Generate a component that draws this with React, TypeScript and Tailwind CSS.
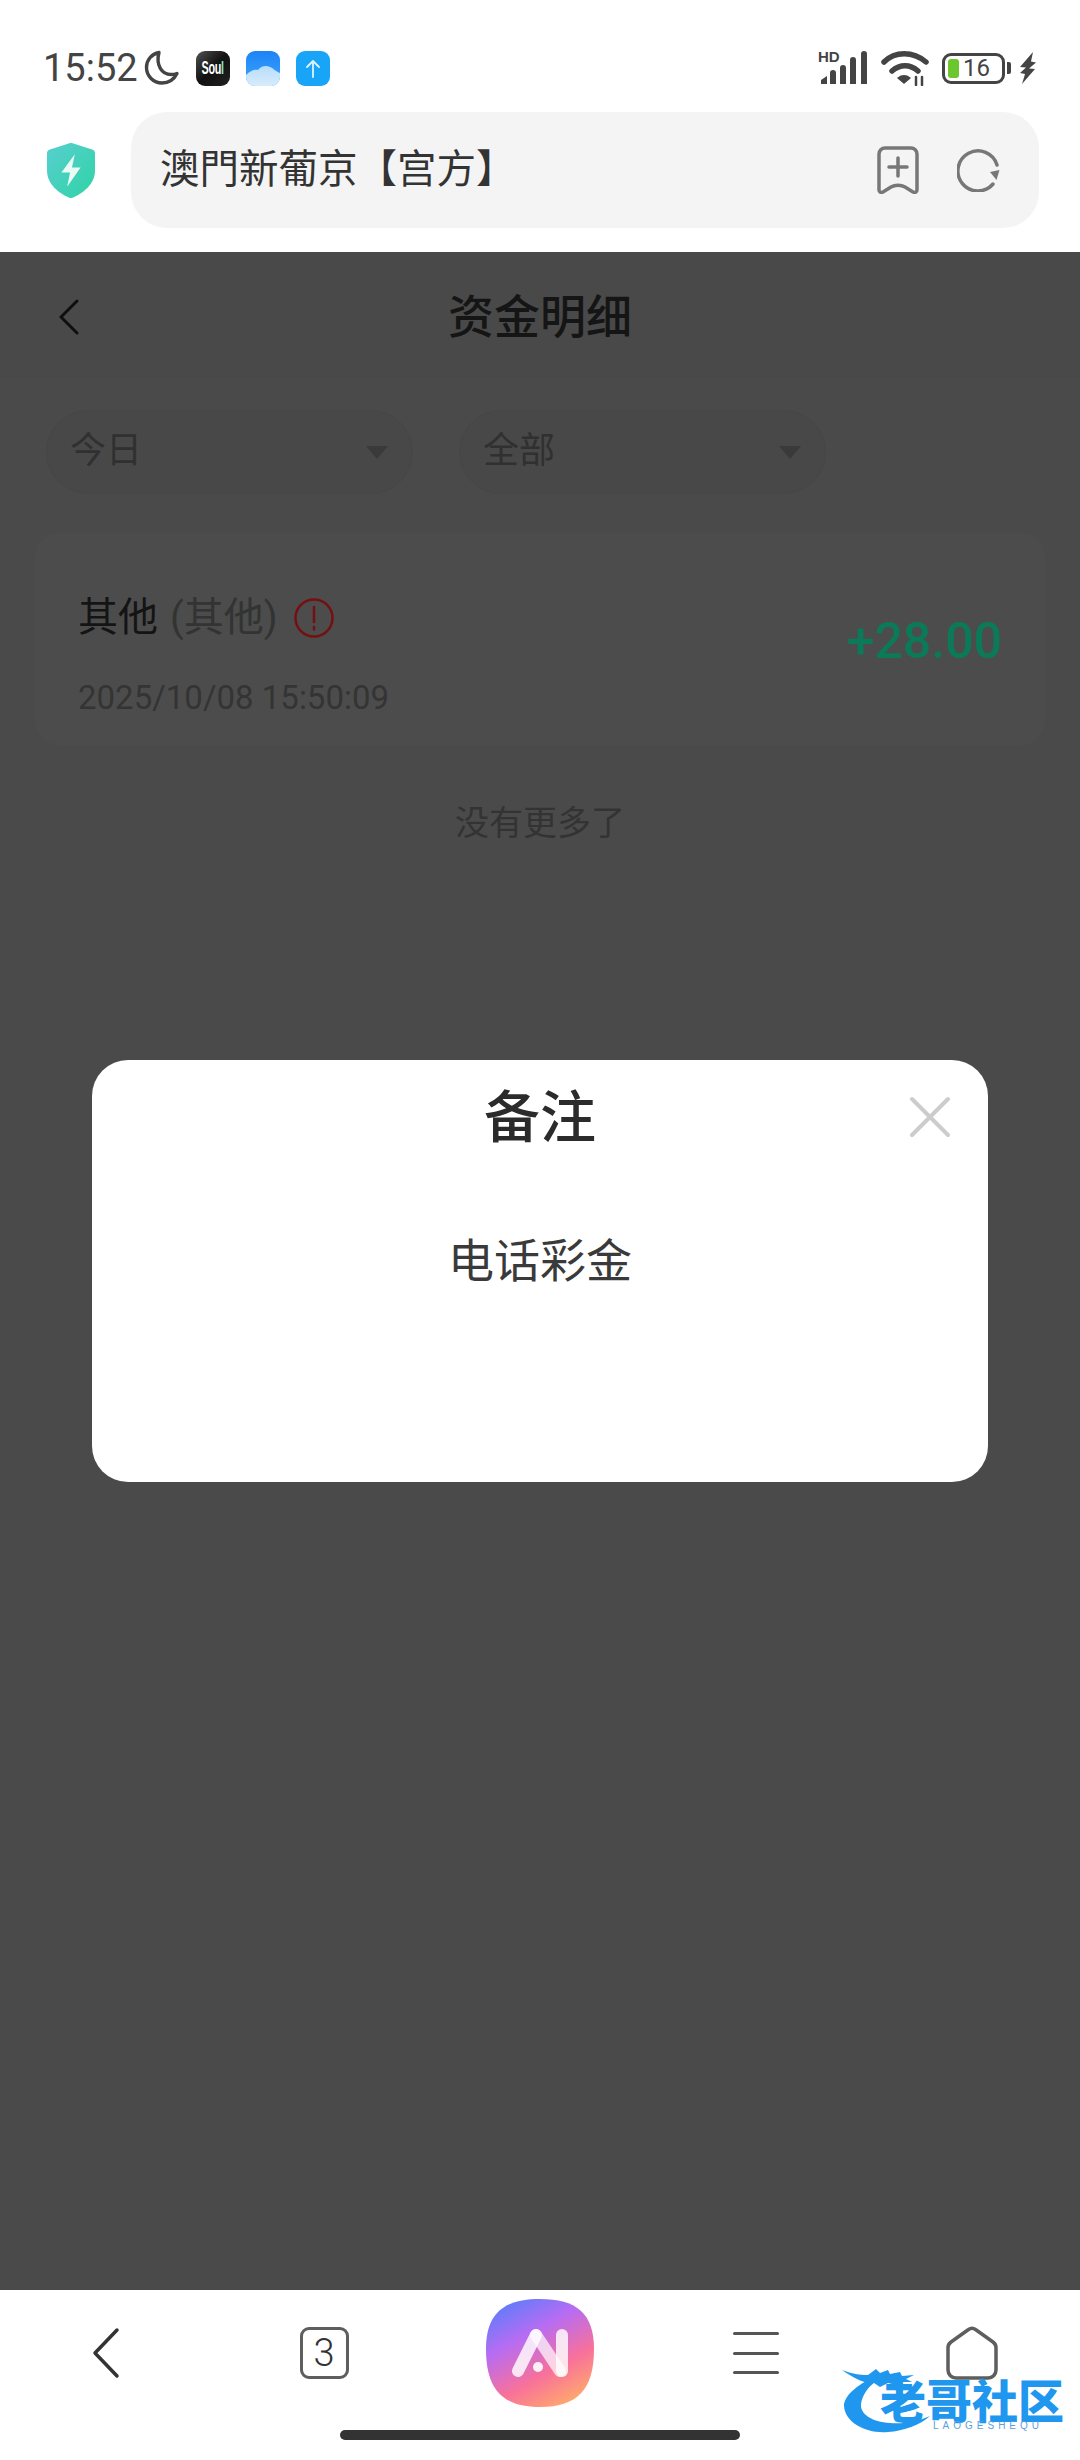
const font = "font-['Roboto','Noto_Sans_CJK_SC',sans-serif]";

function Moon() {
  return (
    <svg width="36" height="36" viewBox="0 0 36 36" fill="none" stroke="#444" strokeWidth="3.4" strokeLinecap="round" strokeLinejoin="round">
      <path d="M15 2.5C7.5 4 2.5 10 2.5 17.5 2.5 26 9.5 33 18 33c6.500 0 12-3.500 15-9.500-2 .8-4 1-6 1-9 0-15.500-9-12-22z" />
    </svg>
  );
}

function SoulIcon() {
  return (
    <div className="w-[34px] h-[35px] rounded-[9px] bg-gradient-to-br from-[#555] via-[#111] to-[#222] flex items-center justify-center overflow-hidden">
      <span className="font-['Liberation_Sans',sans-serif] text-[18px] leading-none font-bold text-white scale-x-[0.6] tracking-tight whitespace-nowrap">
        Sou<span className="text-[#7fe3d6]">l</span>
      </span>
    </div>
  );
}

function CloudIcon() {
  return (
    <svg width="34" height="35" viewBox="0 0 34 35">
      <defs>
        <linearGradient id="sky" x1="0" y1="0" x2="0" y2="1">
          <stop offset="0" stopColor="#1c83f6" />
          <stop offset="1" stopColor="#3fa9fb" />
        </linearGradient>
        <linearGradient id="cl" x1="0" y1="0" x2="0" y2="1">
          <stop offset="0" stopColor="#b8dcfb" />
          <stop offset="1" stopColor="#d8ecfc" />
        </linearGradient>
      </defs>
      <rect width="34" height="35" rx="9" fill="url(#sky)" />
      <path d="M0 24c4-4 8-6 12-5 3-4 8-5 12-3 3 1 5 4 10 6v4a9 9 0 0 1-9 9H9a9 9 0 0 1-9-9z" fill="url(#cl)" />
    </svg>
  );
}

function UploadIcon() {
  return (
    <svg width="34" height="35" viewBox="0 0 34 35" fill="none">
      <rect width="34" height="35" rx="9" fill="#19a5f7" />
      <path d="M17 26V10M11 16l6-6 6 6" stroke="#dff3ff" strokeWidth="1.8" strokeLinecap="round" strokeLinejoin="round" />
    </svg>
  );
}

function Signal() {
  return (
    <div className="relative w-[50px] h-[34px]">
      <span className="absolute left-0 -top-[2px] font-['Liberation_Sans',sans-serif] text-[15px] font-bold leading-none text-[#444]">HD</span>
      <svg className="absolute inset-0" width="50" height="34" viewBox="0 0 50 34" fill="#444">
        <path d="M3 33v-4l6-4v8zM12 33V22a3 3 0 0 1 6 0v11zM22 33V17a3 3 0 0 1 6 0v16zM32 33V9a3 3 0 0 1 6 0v24zM43 33V3a3 3 0 0 1 6 0v30z" />
      </svg>
    </div>
  );
}

function Wifi() {
  return (
    <svg width="48" height="36" viewBox="0 0 48 36" fill="none" stroke="#444" strokeLinecap="round">
      <path d="M3 12C14 1 32 1 45 12" strokeWidth="5.500" />
      <path d="M11 21c8-7 18-7 26 0" strokeWidth="5.500" />
      <path d="M23 33l-6-5c4-3 8-3 12 0z" fill="#444" strokeWidth="1.500" strokeLinejoin="round" />
      <path d="M35 35v-8M41 27v8" strokeWidth="2.500" />
    </svg>
  );
}

function Battery() {
  return (
    <div className="flex items-center gap-[2px]">
      <div className="w-[63px] h-[31px] border-[3px] border-[#444] rounded-[9px] flex items-center pl-[3px] gap-[4px]">
        <div className="w-[11px] h-[19px] rounded-[3px] bg-[#6cc72e]" />
        <span className="text-[24px] leading-none text-[#444]">16</span>
      </div>
      <div className="w-[4px] h-[12px] rounded-r-[2px] bg-[#444]" />
    </div>
  );
}

function Bolt() {
  return (
    <svg width="18" height="32" viewBox="0 0 18 32" fill="#444">
      <path d="M14 0L1 15l6 .5L1 21l5 1-3 10 13-15-6-.5 7-6-5-1z" />
    </svg>
  );
}

function StatusBar() {
  return (
    <div className="h-[112px] pt-6 pl-[43px] pr-[43px] flex items-center justify-between">
      <div className="flex items-center">
        <span className="text-[38px] leading-none text-[#444] w-[93px] whitespace-nowrap">15:52</span>
        <div className="ml-[8px]"><Moon /></div>
        <div className="ml-[16px] flex items-center gap-4">
          <SoulIcon />
          <CloudIcon />
          <UploadIcon />
        </div>
      </div>
      <div className="flex items-center">
        <Signal />
        <div className="ml-[13px]"><Wifi /></div>
        <div className="ml-[13px]"><Battery /></div>
        <div className="ml-[8px]"><Bolt /></div>
      </div>
    </div>
  );
}

function Shield() {
  return (
    <svg width="48" height="57" viewBox="0 0 50 58">
      <defs>
        <linearGradient id="shield" x1="0" y1="0" x2="1" y2="1">
          <stop offset="0" stopColor="#58cfd0" />
          <stop offset="1" stopColor="#2fd3a5" />
        </linearGradient>
      </defs>
      <path d="M25 0l22 7c2 .6 3 2 3 4v18c0 14-12 24-25 29C12 53 0 43 0 29V11c0-2 1-3.400 3-4z" fill="url(#shield)" />
      <path d="M29 12L15 31h9l-3 15 14-20h-9z" fill="#eafbf6" />
    </svg>
  );
}

function UrlBar() {
  return (
    <div className="flex items-center pl-[47px] pr-[41px] pb-6">
      <Shield />
      <div className="ml-[36px] flex-1 h-[116px] rounded-[36px] bg-[#f4f4f4] flex items-center pl-[29px] pr-[38px]">
        <span className="flex-1 text-[39.5px] leading-none text-[#333]">澳門新葡京【宫方】</span>
        <svg width="42" height="48" viewBox="0 0 42 48" fill="none" stroke="#777" strokeWidth="3.500" strokeLinecap="round" strokeLinejoin="round">
          <path d="M8 2h26a6 6 0 0 1 6 6v36c0 2-2 3-4 2l-8-5c-4-2.500-10-2.500-14 0l-8 5c-2 1-4 0-4-2V8a6 6 0 0 1 6-6z" />
          <path d="M21 12v18M12 21h18" />
        </svg>
        <svg className="ml-[38px]" width="44" height="44" viewBox="0 0 44 44" fill="none">
          <path d="M40 17A20 20 0 1 0 36 36" stroke="#777" strokeWidth="3.500" strokeLinecap="round" />
          <path d="M33 24l9.500-2-3 10z" fill="#777" />
        </svg>
      </div>
    </div>
  );
}

function Filter({ label }: { label: string }) {
  return (
    <div className="w-[367px] h-[84px] rounded-[42px] border border-[#464646] bg-[#484848] flex items-center justify-between pl-[23px] pr-[24px]">
      <span className="-mt-[2px] text-[36px] leading-none text-[#303030]">{label}</span>
      <div className="w-0 h-0 border-l-[11px] border-r-[11px] border-t-[13px] border-l-transparent border-r-transparent border-t-[#3a3a3a]" />
    </div>
  );
}

function Modal() {
  return (
    <div className="absolute inset-0 flex items-center justify-center">
      <div className="relative w-[896px] h-[422px] rounded-[36px] bg-white flex flex-col items-center">
        <h2 className="mt-[28px] text-[56px] leading-[60px] font-medium text-[#2b2b2b]">备注</h2>
        <p className="mt-[85px] text-[46px] leading-[56px] text-[#3a3a3a]">电话彩金</p>
        <svg className="absolute top-[35px] right-[36px]" width="44" height="44" viewBox="0 0 44 44" fill="none" stroke="#cccccc" strokeWidth="4" strokeLinecap="round">
          <path d="M4 4l36 36M40 4L4 40" />
        </svg>
      </div>
    </div>
  );
}

function Page() {
  return (
    <main className="relative flex-1 bg-[#4a4a4a]">
      <header className="relative h-[126px] pt-[5px] bg-[#494949] border-b border-[#484848] flex items-center justify-center">
        <svg className="absolute left-[58px]" width="22" height="36" viewBox="0 0 22 36" fill="none" stroke="#0f0f0f" strokeWidth="3" strokeLinecap="round" strokeLinejoin="round">
          <path d="M19 2L3 18l16 16" />
        </svg>
        <h1 className="text-[46px] leading-none font-medium text-[#151515]">资金明细</h1>
      </header>
      <div className="mt-[32px] pl-[46px] flex gap-[46px]">
        <Filter label="今日" />
        <Filter label="全部" />
      </div>
      <section className="mt-[39px] mx-[35px] h-[212px] rounded-[24px] bg-[#4c4c4c] pl-[43px] pr-[43px] flex items-center justify-between">
        <div className="pt-[34px]">
          <div className="flex items-center">
            <span className="text-[40px] leading-[46px] text-[#141414]">其他</span>
            <span className="ml-[12px] text-[40px] leading-[46px] text-[#333]">(其他)</span>
            <svg className="ml-[15px]" width="42" height="42" viewBox="0 0 42 42" fill="none" stroke="#751010" strokeWidth="2.500">
              <circle cx="21" cy="21" r="18.500" />
              <path d="M21 10v15M21 30v2.500" strokeLinecap="round" />
            </svg>
          </div>
          <div className="mt-[37px] text-[33px] leading-[40px] text-[#343434]">2025/10/08 15:50:09</div>
        </div>
        <span className="pt-[3px] text-[50px] leading-none font-medium text-[#0b7a58]">+28.00</span>
      </section>
      <p className="mt-[58px] text-center text-[34px] leading-[40px] text-[#333]">没有更多了</p>
      <Modal />
    </main>
  );
}

function Watermark() {
  return (
    <div className="absolute left-[842px] top-[78px] w-[225px] h-[70px]">
      <svg className="absolute inset-0 overflow-visible" width="225" height="70" viewBox="0 0 225 70" fill="#1f97ee">
        <path d="M30 10C10 20 2 30 2 38c1 17 23 28 44 26 16-1 32-7 42-16-14 6-26 8-40 7-18-1-30-9-29-19 1-8 7-18 17-24z" />
        <path d="M0 2c10 4 18 5 26 5l8-6 4 4 8-3 2 4 10-2 2 4 12-1-8 4 6 3-12 0-4 3-8-2-8 4-6-4c-10 1-22-6-32-13z" />
      </svg>
      <span className="absolute left-[38px] top-[15px] font-black text-[46px] leading-[38px] text-[#1f97ee] whitespace-nowrap">老哥社区</span>
      <span className="absolute left-[91px] top-[53px] text-[10px] leading-none tracking-[4px] text-[#5a9fe0] whitespace-nowrap font-['Liberation_Sans',sans-serif]">LAOGESHEQU</span>
    </div>
  );
}

function AiLogo() {
  return (
    <svg width="108" height="108" viewBox="0 0 108 108">
      <defs>
        <linearGradient id="ai" x1="0.2" y1="0" x2="0.75" y2="1">
          <stop offset="0" stopColor="#5c7dfb" />
          <stop offset="0.33" stopColor="#b76cf3" />
          <stop offset="0.68" stopColor="#f8719a" />
          <stop offset="1" stopColor="#ffab6b" />
        </linearGradient>
      </defs>
      <path d="M54 0C90 0 108 14 108 50c0 40-16 58-54 58S0 90 0 50C0 14 18 0 54 0z" fill="url(#ai)" />
      <g stroke="#fff" strokeWidth="12" strokeLinecap="round" fill="none">
        <path d="M50 36L32 72" opacity="0.82" />
        <path d="M50 36l24 36" opacity="0.7" />
        <path d="M76 36v36" opacity="0.82" />
      </g>
      <circle cx="52" cy="68" r="5" fill="#fff" opacity="0.9" />
    </svg>
  );
}

function BottomNav() {
  return (
    <nav className="relative h-[170px] bg-white">
      <div className="h-[126px] grid grid-cols-5 items-center justify-items-center">
        <svg className="-ml-[5px]" width="28" height="52" viewBox="0 0 28 52" fill="none" stroke="#333" strokeWidth="3.500" strokeLinecap="round" strokeLinejoin="round">
          <path d="M25 3L3 26l22 23" />
        </svg>
        <div className="w-[49px] h-[52px] rounded-[9px] border-[3px] border-[#5e5e5e] flex items-center justify-center">
          <span className="text-[38px] font-light leading-none text-[#333]">3</span>
        </div>
        <AiLogo />
        <div className="w-[46px] h-[42px] flex flex-col justify-between">
          <div className="h-[3px] rounded bg-[#555]" />
          <div className="h-[3px] rounded bg-[#555]" />
          <div className="h-[3px] rounded bg-[#555]" />
        </div>
        <svg width="52" height="54" viewBox="0 0 52 54" fill="none" stroke="#5e5e5e" strokeWidth="3.500" strokeLinejoin="round">
          <path d="M22.500 3.500L5 16c-2 1.500-3 3-3 5.500V44a8 8 0 0 0 8 8h32a8 8 0 0 0 8-8V21.500c0-2.500-1-4-3-5.500L29.500 3.500c-2-1.500-5-1.500-7 0z" />
        </svg>
      </div>
      <div className="mt-[14px] mx-auto w-[400px] h-[10px] rounded-full bg-[#333]" />
      <Watermark />
    </nav>
  );
}

export default function App() {
  return (
    <div className={`w-[1080px] h-[2460px] flex flex-col bg-white overflow-hidden ${font}`}>
      <div className="bg-white">
        <StatusBar />
        <UrlBar />
      </div>
      <Page />
      <BottomNav />
    </div>
  );
}
